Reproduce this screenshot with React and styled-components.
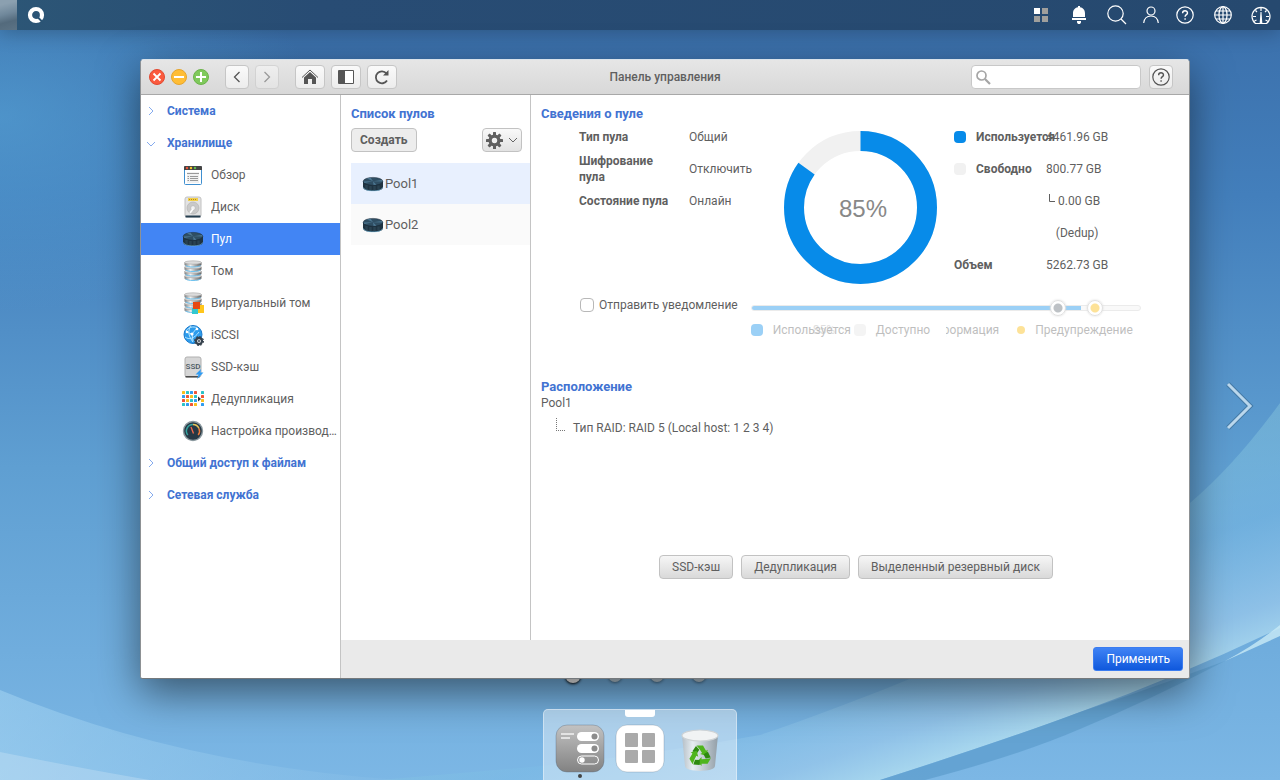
import React from 'react';
import styled, { createGlobalStyle, css } from 'styled-components';

const GlobalStyle = createGlobalStyle`
  *, *::before, *::after { box-sizing: border-box; }
  body {
    margin: 0;
    font: 12px/16px Roboto, "Liberation Sans", sans-serif;
    color: #5f5f5f;
  }
  button, input { font: inherit; color: inherit; }
  h1, h2, ul, dl, dd, p { margin: 0; padding: 0; }
  ul { list-style: none; }
  svg { display: block; flex: none; }
`;

/* ---------- desktop ---------- */

const Desktop = styled.div`
  position: relative;
  display: flex;
  flex-direction: column;
  height: 100vh;
  min-height: 640px;
  overflow: hidden;
  background: linear-gradient(#3f7bb6, #66a8dc);
`;

const Wallpaper = styled.svg`
  position: absolute;
  inset: 0;
  width: 100%;
  height: 100%;
`;

const TopBar = styled.header`
  position: relative;
  display: flex;
  align-items: center;
  justify-content: space-between;
  height: 30px;
  flex: none;
  padding-right: 7px;
  background: linear-gradient(90deg, #2c5676, #284c74 25%, #26496f);
  box-shadow: 0 2px 20px rgba(0, 0, 0, 0.25);
`;

const BarGroup = styled.div`
  display: flex;
  align-items: center;
  height: 100%;
  gap: ${(p) => p.$gap}px;
`;

const DesktopEdge = styled.span`
  width: 17px;
  height: 100%;
  background: linear-gradient(165deg, #8ba0b0 15%, #70889b 45%, #536a7c 70%, #5c7385);
`;

const BarButton = styled.button`
  display: grid;
  place-items: center;
  width: ${(p) => (p.$narrow ? 16 : 24)}px;
  height: 30px;
  padding: 0;
  border: 0;
  background: none;
`;

const Stage = styled.main`
  position: relative;
  flex: 1;
  min-height: 0;
  display: flex;
  padding: 29px 90px 30px 140px;
`;

const NextDesktop = styled.button`
  position: absolute;
  right: 24px;
  top: 50%;
  padding: 10px 0 0;
  border: 0;
  background: none;
`;

const Pager = styled.div`
  position: absolute;
  left: 0;
  right: 0;
  bottom: 26px;
  display: grid;
  grid-template-columns: repeat(4, 42px);
  justify-content: center;
  place-items: center;
  padding-right: 8px;
`;

const PagerDot = styled.span`
  width: ${(p) => (p.$active ? 16 : 14)}px;
  height: ${(p) => (p.$active ? 16 : 14)}px;
  border-radius: 50%;
  background: ${(p) => (p.$active ? '#eee' : '#b4c6d2')};
  box-shadow: 0 1px 3px ${(p) => (p.$active ? '#000' : 'rgba(0, 0, 0, 0.4)')};
`;

const DockArea = styled.footer`
  position: relative;
  display: flex;
  justify-content: center;
  flex: none;
`;

const Dock = styled.div`
  position: relative;
  display: flex;
  gap: 12px;
  height: 71px;
  padding: 15px 12px 0;
  border: 1px solid rgba(255, 255, 255, 0.4);
  border-bottom: 0;
  border-radius: 5px 5px 0 0;
  background: rgba(255, 255, 255, 0.4);
`;

const DockHandle = styled.span`
  position: absolute;
  top: 0;
  left: 50%;
  width: 30px;
  height: 7px;
  margin-left: -15px;
  border-radius: 0 0 3px 3px;
  background: #fff;
`;

const DockButton = styled.button`
  display: flex;
  flex-direction: column;
  align-items: center;
  gap: 1px;
  padding: 0;
  border: 0;
  background: none;
`;

const RunningDot = styled.span`
  width: 4px;
  height: 4px;
  border-radius: 50%;
  background: #444;
`;

/* ---------- window ---------- */

const Window = styled.section`
  position: relative;
  flex: 1;
  display: flex;
  flex-direction: column;
  min-width: 0;
  border: 1px solid #8d9194;
  border-top-color: #d9e2ea;
  border-bottom-color: #75797c;
  border-radius: 4px 4px 3px 3px;
  background: #fff;
  box-shadow: 0 14px 42px rgba(0, 0, 0, 0.5);
  overflow: hidden;
`;

const TitleBar = styled.div`
  display: grid;
  grid-template-columns: 1fr auto 1fr;
  align-items: center;
  height: 35px;
  flex: none;
  padding: 0 8px;
  border-bottom: 1px solid #a8a8a8;
  background: linear-gradient(#e6e6e6, #d8d8d8);
`;

const TitleGroup = styled.div`
  display: flex;
  align-items: center;
  justify-content: ${(p) => (p.$end ? 'flex-end' : 'flex-start')};
  padding-right: ${(p) => (p.$end ? 8 : 0)}px;
  gap: ${(p) => p.$gap}px;
`;

const WindowTitle = styled.h1`
  font-size: 12px;
  line-height: 16px;
  font-weight: 500;
  color: #5f5f5f;
`;

const RoundButton = styled.button`
  display: grid;
  place-items: center;
  width: 16px;
  height: 16px;
  padding: 0;
  border: 1px solid ${(p) => p.$edge};
  border-radius: 50%;
  background: ${(p) => p.$fill};
`;

const ToolButton = styled.button`
  display: grid;
  place-items: center;
  width: ${(p) => (p.$wide ? 30 : 24)}px;
  height: 24px;
  padding: 0;
  border: 1px solid #c6c6c6;
  border-radius: 4px;
  background: linear-gradient(#fafafa, #ececec);
  &:disabled { opacity: 0.5; }
`;

const SearchBox = styled.label`
  display: flex;
  align-items: center;
  gap: 4px;
  width: 170px;
  height: 24px;
  padding: 0 4px;
  border: 1px solid #c8c8c8;
  border-radius: 4px;
  background: #fff;
`;

const SearchInput = styled.input`
  flex: 1;
  min-width: 0;
  border: 0;
  outline: 0;
  background: none;
`;

const Body = styled.div`
  display: flex;
  flex: 1;
  min-height: 0;
`;

const Sidebar = styled.nav`
  width: 200px;
  flex: none;
  border-right: 1px solid #c4c4c4;
  background: #fff;
`;

const SectionButton = styled.button`
  display: flex;
  align-items: center;
  gap: 9px;
  width: 100%;
  height: 32px;
  padding: 0 5px;
  border: 0;
  background: none;
  font-weight: 700;
  color: #4273d2;
`;

const NavLink = styled.a`
  display: flex;
  align-items: center;
  gap: 6px;
  height: 32px;
  padding: 0 3px 0 40px;
  text-decoration: none;
  color: ${(p) => (p.$active ? '#fff' : '#5f5f5f')};
  background: ${(p) => (p.$active ? '#4285f4' : 'transparent')};
`;

const NavText = styled.span`
  overflow: hidden;
  white-space: nowrap;
  text-overflow: ellipsis;
`;

const Workspace = styled.div`
  display: flex;
  flex-direction: column;
  flex: 1;
  min-width: 0;
`;

const Columns = styled.div`
  display: flex;
  flex: 1;
  min-height: 0;
`;

const PoolColumn = styled.section`
  width: 190px;
  flex: none;
  padding: 11px 0 0 10px;
  border-right: 1px solid #c4c4c4;
`;

const Heading = styled.h2`
  font-size: 13px;
  line-height: 16px;
  font-weight: 700;
  color: #4273d2;
`;

const PoolTools = styled.div`
  display: flex;
  justify-content: space-between;
  padding: 6px 8px 11px 0;
`;

const buttonShape = css`
  height: 24px;
  border: 1px solid #c2c2c2;
  border-radius: 4px;
  white-space: nowrap;
`;

const CreateButton = styled.button`
  ${buttonShape}
  padding: 0 8px;
  background: #ededed;
  font-weight: 700;
`;

const GearButton = styled.button`
  ${buttonShape}
  display: flex;
  align-items: center;
  justify-content: space-between;
  width: 40px;
  padding: 0 3px;
  background: linear-gradient(#f9f9f9, #e2e2e2);
`;

const PoolButton = styled.button`
  display: flex;
  align-items: center;
  gap: 1px;
  width: 100%;
  height: 41px;
  padding: 0 0 0 11px;
  border: 0;
  font-size: 13px;
  background: ${(p) => (p.$active ? '#e8f0fe' : '#fafafa')};
`;

const Details = styled.section`
  display: flex;
  flex-direction: column;
  flex: 1;
  min-width: 0;
  padding: 11px 18px 0 10px;
`;

const Summary = styled.div`
  display: flex;
  padding-left: 38px;
`;

const Facts = styled.dl`
  display: grid;
  grid-template-columns: 110px 95px;
  grid-auto-rows: 32px;
  align-content: start;
  align-items: center;
  margin-top: -1px;
`;

const FactName = styled.dt`
  font-weight: 700;
  padding-right: 20px;
  white-space: ${(p) => (p.$wrap ? 'normal' : 'nowrap')};
`;

const Chart = styled.figure`
  margin: 9px 17px 0 0;
`;

const Capacity = styled.dl`
  display: grid;
  grid-template-columns: 22px 70px auto;
  grid-auto-rows: minmax(32px, auto);
  align-content: start;
  align-items: center;
  margin-top: -1px;
  line-height: 32px;
`;

const Swatch = styled.span`
  width: 12px;
  height: 12px;
  flex: none;
  border-radius: 4px;
  background: ${(p) => p.$fill};
`;

const CapacityName = styled.dt`
  grid-column: ${(p) => (p.$full ? '1 / 3' : 'auto')};
  width: 70px;
  font-weight: 700;
  white-space: nowrap;
`;

const CapacityValue = styled.dd`
  white-space: nowrap;
  ${(p) => p.$nested && css`
    grid-column: 3;
    text-align: center;
  `}
`;

const NestedLine = styled.span`
  display: flex;
  justify-content: center;
  gap: 2px;
  padding-right: 6px;
`;

const Notify = styled.div`
  display: flex;
  gap: 13px;
  padding: 11px 0 0 39px;
`;

const CheckLabel = styled.label`
  display: flex;
  align-items: center;
  gap: 5px;
  height: 20px;
  white-space: nowrap;
`;

const CheckBox = styled.input`
  appearance: none;
  width: 14px;
  height: 14px;
  margin: 0;
  border: 1px solid #b8b8b8;
  border-radius: 4px;
  background: #fff;
`;

const Threshold = styled.div`
  display: flex;
  flex-direction: column;
  gap: 5px;
  width: 390px;
  padding-top: 4px;
  opacity: 0.4;
`;

const Track = styled.div`
  position: relative;
  height: 18px;
  display: flex;
  align-items: center;
`;

const TrackBar = styled.div`
  width: 100%;
  height: 6px;
  border: 1px solid #cfcfcf;
  border-radius: 3px;
  background: #f1f1f1;
`;

const TrackFill = styled.div`
  height: 4px;
  border-radius: 2px 0 0 2px;
  background: #078be9;
`;

const Range = styled.input`
  position: absolute;
  inset: 0;
  width: 100%;
  margin: 0;
  appearance: none;
  background: none;
  pointer-events: none;
  &::-webkit-slider-thumb {
    appearance: none;
    width: 16px;
    height: 16px;
    border: 1px solid #b5b5b5;
    border-radius: 50%;
    background: radial-gradient(circle, ${(p) => p.$fill} 4px, #fff 5px);
    box-shadow: 0 0 2px #999;
  }
`;

const ThresholdLegend = styled.div`
  display: flex;
  align-items: center;
  line-height: 16px;
`;

const LegendItem = styled.span`
  position: relative;
  display: flex;
  align-items: center;
  gap: 10px;
  margin-right: ${(p) => p.$after}px;
`;

const UsedPercent = styled.span`
  position: absolute;
  left: 62px;
  opacity: 0.5;
`;

const CutLabel = styled.span`
  display: flex;
  justify-content: flex-end;
  width: 53px;
  margin-right: 18px;
  overflow: hidden;
`;

const LegendDot = styled.span`
  width: 8px;
  height: 8px;
  border-radius: 50%;
  background: #fcb900;
`;

const Location = styled.div`
  padding-top: 41px;
`;

const RaidLine = styled.p`
  display: flex;
  align-items: center;
  gap: 8px;
  padding: 7px 0 0 15px;
`;

const Elbow = styled.span`
  width: 9px;
  height: 13px;
  margin-bottom: 6px;
  border: 1px dotted #777;
  border-width: 0 0 1px 1px;
`;

const Actions = styled.div`
  display: flex;
  justify-content: center;
  gap: 8px;
  margin-top: auto;
  padding-bottom: 61px;
`;

const ActionButton = styled.button`
  ${buttonShape}
  padding: 0 12px;
  background: linear-gradient(#f6f6f6, #d9d9d9);
`;

const WindowFooter = styled.div`
  display: flex;
  align-items: center;
  justify-content: flex-end;
  height: 38px;
  flex: none;
  padding: 0 6px;
  background: #eaeaea;
`;

const ApplyButton = styled.button`
  height: 24px;
  padding: 0 12px;
  border: 1px solid #3b7cf0;
  border-radius: 3px;
  background: linear-gradient(#3f83f5, #0f58dc);
  color: #fff;
`;

/* ---------- icons ---------- */

const Chevron = ({ open }) => (
  <svg width="12" height="12" viewBox="0 0 12 12" fill="none" stroke="#85abee">
    <path d={open ? 'M1 5l4 4 4-4' : 'M3 2l4 4-4 4'} />
  </svg>
);

const Arrow = ({ d }) => (
  <svg width="12" height="14" viewBox="0 0 12 14" fill="none" stroke="#555" strokeWidth="1.3"><path d={d} /></svg>
);

const HelpMark = ({ size, color }) => (
  <svg width={size} height={size} viewBox="0 0 18 18" fill="none" stroke={color} strokeWidth="1.2">
    <circle cx="9" cy="9" r="8.2" />
    <path d="M6.6 7.2c0-3.3 4.9-3 4.9-.3 0 1.7-2.4 1.8-2.4 3.9M9.1 12.2v1.5" strokeWidth="1.4" />
  </svg>
);

const PoolIcon = () => (
  <svg width="22" height="22" viewBox="0 0 22 22">
    <path d="M1 8.500v5.500c0 2.600 4 4 10 4s10-1.400 10-4V8.500z" fill="#1f3341" />
    <path d="M1.500 14.500c.8 2.300 4.500 3.300 9.500 3.300s8.700-1 9.500-3.300" fill="none" stroke="#7cc4ea" strokeWidth=".7" opacity=".8" />
    <path d="M4.500 12v4M8.500 13v4M12.500 13v4M16.500 12.500v3.500" stroke="#2a4251" strokeWidth="2.500" />
    <ellipse cx="11" cy="8.300" rx="9.800" ry="3.900" fill="#2f4e63" stroke="#1a2b38" strokeWidth=".5" />
    <path d="M11 8.300L5 5.500 8.500 4.600zM11 8.300l9-1.300.4 1.500zM11 8.300l3.500 3.500-3 .3zM11 8.300L2.500 10 1.500 8.500z" fill="#4c7690" />
  </svg>
);

const DiskStack = () => (
  <>
    <defs>
      <linearGradient id="plate" x2="1">
        <stop offset="0" stopColor="#7b7b7b" /><stop offset=".35" stopColor="#f2f2f2" />
        <stop offset=".65" stopColor="#a5a5a5" /><stop offset="1" stopColor="#666" />
      </linearGradient>
    </defs>
    {[16, 11.5, 7, 2.5].map((y) => (
      <g key={y}>
        <path d={`M2.500 ${y}v2.200c0 1.300 3.800 2.300 8.500 2.300s8.500-1 8.500-2.300v-2.200z`} fill="url(#plate)" />
        <path d={`M3.500 ${y + 3}c1.500 1 4 1.500 7.500 1.500s6-.5 7.500-1.500`} fill="none" stroke="#6fc3f0" />
        <ellipse cx="11" cy={y} rx="8.500" ry="1.700" fill="#dcdcdc" stroke="#999" strokeWidth=".5" />
      </g>
    ))}
  </>
);

const dedupColors = ['#f9bf1b', '#ef5536', '#2f9cf0', '#29c3c8'];

const navIcons = {
  overview: (
    <>
      <rect x="2.500" y="2.500" width="17" height="18" rx="1" fill="#fff" stroke="#3f8fd0" />
      <path d="M2 6V3q0-1 1-1h16q1 0 1 1v3z" fill="#444" />
      <circle cx="5" cy="4" r="1.200" fill="#f0553a" /><circle cx="9" cy="4" r="1.200" fill="#f7c52b" /><circle cx="13" cy="4" r="1.200" fill="#5cc04b" />
      <rect x="5" y="8" width="12" height="11" fill="#f1f1f1" />
      <path d="M5 9.500h12M8 12.500h8M8 14.500h8M8 16.500h8M5.500 12.500H7M5.500 14.500H7M5.500 16.500H7" stroke="#999" />
    </>
  ),
  disk: (
    <>
      <rect x="3" y="1" width="16" height="20" rx="2" fill="#e3e3e3" stroke="#c2c2c2" />
      <path d="M3.500 19.500h15V21.500h-15z" fill="#263f50" />
      <path d="M6 2h10v3H6z" fill="#f2d04a" /><path d="M7 3.500h8" stroke="#b98a1a" strokeDasharray="1 1" />
      <circle cx="11" cy="12" r="6" fill="#c9c9c9" stroke="#b5b5b5" strokeWidth=".7" /><circle cx="11" cy="12" r="2.300" fill="#f2f2f2" stroke="#aaa" strokeWidth=".5" />
      <path d="M8 17l3-4" stroke="#fff" strokeWidth="1.500" />
    </>
  ),
  volume: <DiskStack />,
  virtual: (
    <>
      <DiskStack />
      <rect x="10" y="16" width="6" height="6" fill="#32c8d0" /><rect x="16" y="13" width="6" height="8" fill="#ffc61c" /><rect x="11" y="10" width="7" height="7" fill="#e84812" />
    </>
  ),
  iscsi: (
    <>
      <circle cx="11" cy="10.500" r="9" fill="#2d9cec" stroke="#1678cc" />
      <path d="M4 7c3-5 10-5 12-2M3 13c4 3 9 2 14-5M9 2c-4 5-2 11 2 16M4 8l6 2 5-6M10 10l1 7" fill="none" stroke="#b5e5ff" strokeWidth="1" />
      <circle cx="5" cy="8" r="1.300" fill="#fff" /><circle cx="10" cy="10" r="1.600" fill="#fff" /><circle cx="15" cy="5" r="1.300" fill="#fff" />
      <circle cx="17" cy="17" r="3" fill="#fff" stroke="#36424d" strokeWidth="2.300" /><circle cx="17" cy="17" r="4.500" fill="none" stroke="#36424d" strokeDasharray="2 1.500" /><circle cx="17" cy="17" r="1" fill="#36424d" />
    </>
  ),
  ssd: (
    <>
      <rect x="3" y="1" width="16" height="20" rx="2" fill="#d6d6d6" stroke="#b0b0b0" />
      <path d="M3.500 20h14v1.500h-14z" fill="#4c4c4c" />
      <text x="11" y="12.500" fontSize="8" fontWeight="500" textAnchor="middle" fill="#4b5962">SSD</text>
      <path d="M19 13l-5.500 5.500h3L15 23l6.500-6.500h-3z" fill="#2f9cf5" />
    </>
  ),
  dedup: (
    <>
      {[0, 1, 2, 3, 5].map((c) => [0, 1, 2, 3].map((r) => (
        <rect key={`${c}-${r}`} x={c === 5 ? 19 : c * 4} y={3 + r * 4} width="3" height="3" rx=".6" fill={dedupColors[(c * 3 + r * 2 + (r > 1 ? 1 : 0)) % 4]} />
      )))}
      <path d="M16 8.500l3 2.500-3 2.500z" fill="#333" />
    </>
  ),
  tuning: (
    <>
      <circle cx="11" cy="11" r="9.500" fill="#263845" stroke="#8b999f" strokeWidth="1.400" />
      <path d="M5.800 15a6.500 6.500 0 0 1 5.200-10.500" fill="none" stroke="#35a3a0" strokeWidth="1.500" />
      <path d="M11 4.500a6.500 6.500 0 0 1 6 4" fill="none" stroke="#e6c45a" strokeWidth="1.500" />
      <path d="M17 8.500a6.500 6.500 0 0 1-.8 6.500" fill="none" stroke="#ee7a3a" strokeWidth="1.500" />
      <path d="M9 7l2.500 6.500" stroke="#f46a4a" strokeWidth="1.300" />
    </>
  ),
};

const NavIcon = ({ name }) =>
  name === 'pool' ? <PoolIcon /> : (
    <svg width="22" height="22" viewBox="0 0 22 22" overflow="visible">{navIcons[name]}</svg>
  );

const IconSlot = styled.span`
  display: grid;
  place-items: center;
  width: 24px;
  flex: none;
`;

const QLogo = () => (
  <svg width="18" height="18" viewBox="0 0 18 18" fill="none">
    <circle cx="9" cy="9" r="6" stroke="#fff" strokeWidth="4.200" />
    <path d="M11 11.500l5 5" stroke="#2b5576" strokeWidth="1.800" />
  </svg>
);

const stroke = { fill: 'none', stroke: '#fff', strokeWidth: 1.2 };

const trayIcons = [
  { label: 'Рабочие столы', icon: (
    <svg width="14" height="14" viewBox="0 0 14 14" fill="#a09f9c">
      <path d="M0 0h6v6H0z" fill="#fff" /><path d="M8 0h6v6H8zM0 8h6v6H0zM8 8h6v6H8z" />
    </svg>
  ) },
  { label: 'Уведомления', icon: (
    <svg width="16" height="20" viewBox="0 0 16 20" fill="#fff">
      <path d="M7 1h2v1.300c3.500.6 5 3.200 5 6V12H2V8.300c0-2.800 1.500-5.400 5-6zM1 13h14v2H1zM6 16h4v1.500L9 19H7l-1-1.500z" />
    </svg>
  ) },
  { label: 'Поиск', icon: (
    <svg width="20" height="20" viewBox="0 0 20 20" {...stroke}><circle cx="8.500" cy="8.500" r="7.700" /><path d="M14 14l5 5" /></svg>
  ) },
  { label: 'Пользователь', narrow: true, icon: (
    <svg width="16" height="18" viewBox="0 0 16 18" {...stroke}><circle cx="8" cy="5" r="4" /><path d="M.7 17c.5-4.500 3-7 7.300-7s6.800 2.500 7.300 7" /></svg>
  ) },
  { label: 'Справка', icon: <HelpMark size={18} color="#fff" /> },
  { label: 'Язык', icon: (
    <svg width="18" height="18" viewBox="0 0 18 18" {...stroke}>
      <circle cx="9" cy="9" r="8.300" /><ellipse cx="9" cy="9" rx="4" ry="8.300" /><path d="M9 1v16M1 9h16M2 5h14M2 13h14" />
    </svg>
  ) },
  { label: 'Мониторинг', icon: (
    <svg width="20" height="19" viewBox="0 0 20 19" {...stroke}>
      <path d="M4.500 17.500a9 9 0 1 1 11 0zM10 2v3M4.500 4.500l1.500 1.500M15.500 4.500L14 6M2 10.500h3M18 10.500h-3M3.500 15l2-1M16.500 15l-2-1" />
      <path d="M9.500 6h1l.8 11H8.700z" fill="#fff" stroke="none" />
    </svg>
  ) },
];

const GearIcon = () => (
  <svg width="17" height="17" viewBox="0 0 17 17">
    <g fill="#5f5f5f">
      {[0, 45, 90, 135].map((a) => <rect key={a} x="7" y="0" width="3" height="17" rx=".6" transform={`rotate(${a} 8.500 8.500)`} />)}
      <circle cx="8.500" cy="8.500" r="6" />
    </g>
    <circle cx="8.500" cy="8.500" r="2.700" fill="#efefef" />
  </svg>
);

const SettingsApp = () => (
  <svg width="48" height="48" viewBox="0 0 48 48" overflow="visible">
    <defs><linearGradient id="grey" y2="1" x2="0"><stop stopColor="#c2c2c2" /><stop offset="1" stopColor="#828282" /></linearGradient></defs>
    <rect width="48" height="47" rx="11" fill="url(#grey)" stroke="rgba(80,100,120,.35)" />
    <path d="M5 9h13M5 13h9" stroke="#e3e3e3" strokeWidth="2" />
    <rect x="21" y="7" width="22" height="9" rx="4.500" fill="#fff" /><circle cx="38.500" cy="11.500" r="3" fill="#8c8c8c" />
    <rect x="21" y="19" width="22" height="9" rx="4.500" fill="#fff" /><circle cx="38.500" cy="23.500" r="3" fill="#8c8c8c" />
    <rect x="21.500" y="31" width="21" height="8" rx="4" fill="none" stroke="#fff" /><circle cx="26" cy="35" r="2.700" fill="#fff" />
  </svg>
);

const AppsIcon = () => (
  <svg width="48" height="48" viewBox="0 0 48 48" overflow="visible">
    <rect width="48" height="47" rx="11" fill="#fff" stroke="rgba(80,100,120,.25)" />
    <g fill="#aaa"><rect x="9" y="8" width="13" height="14" rx="1" /><rect x="26" y="8" width="13" height="14" rx="1" /><rect x="9" y="25" width="13" height="13" rx="1" /><rect x="26" y="25" width="13" height="13" rx="1" /></g>
  </svg>
);

const TrashIcon = () => (
  <svg width="48" height="48" viewBox="0 0 48 48">
    <defs><linearGradient id="bin" x2="1"><stop stopColor="#b7bcc0" /><stop offset=".3" stopColor="#f0f2f3" /><stop offset=".6" stopColor="#c4c9cd" /><stop offset="1" stopColor="#8d959b" /></linearGradient></defs>
    <path d="M6 10l3 31c.5 6.500 29.500 6.500 30 0l3-31z" fill="url(#bin)" opacity=".85" />
    <ellipse cx="24" cy="10.500" rx="18" ry="5.500" fill="#f1f3f4" stroke="#cdd2d5" strokeWidth="1.200" />
    {[0, 120, 240].map((a) => (
      <g key={a} transform={`rotate(${a} 24 31)`} fill="#4fb51d">
        <path d="M20.500 20.500h6.500l3 5.200 1.800-1-1.600 6-6-1.600 1.900-1.100L23.800 24.500z" />
        <path d="M20 21l3.300 3.800-2.600 4-4.300-2.500z" fill="#2e8a10" />
      </g>
    ))}
  </svg>
);

const Donut = ({ percent }) => {
  const length = 2 * Math.PI * 66.5;
  return (
    <svg width="153" height="153" viewBox="0 0 153 153" role="img" aria-label={`${percent}%`}>
      <g fill="none" strokeWidth="20" transform="rotate(-90 76.500 76.500)">
        <circle cx="76.500" cy="76.500" r="66.500" stroke="#f1f1f1" />
        <circle cx="76.500" cy="76.500" r="66.500" stroke="#078be9" strokeDasharray={`${(length * 84.8) / 100} ${length}`} />
      </g>
      <text x="79" y="86" textAnchor="middle" fontFamily="Liberation Sans, sans-serif" fontSize="24" fill="#888">{percent}%</text>
    </svg>
  );
};

const Background = () => (
  <Wallpaper viewBox="0 0 1280 780" preserveAspectRatio="none" aria-hidden="true">
    <defs>
      <linearGradient id="sky" x2="0" y2="1"><stop stopColor="#3a6ea9" /><stop offset=".25" stopColor="#437fbc" /><stop offset=".6" stopColor="#5f9fd2" /><stop offset="1" stopColor="#7cb7e5" /></linearGradient>
      <radialGradient id="glow" cx="0" cy=".15" r=".25"><stop stopColor="#57a5d8" stopOpacity=".6" /><stop offset="1" stopColor="#57a5d8" stopOpacity="0" /></radialGradient>
      <linearGradient id="sheet" gradientUnits="userSpaceOnUse" x1="1150" y1="440" x2="1230" y2="670"><stop stopColor="#8ccbdc" stopOpacity=".4" /><stop offset=".45" stopColor="#7cbce6" stopOpacity=".5" /><stop offset=".8" stopColor="#96c6ea" stopOpacity=".8" /><stop offset="1" stopColor="#b0def0" stopOpacity=".95" /></linearGradient>
      <linearGradient id="low" x2="1" y2="0"><stop stopColor="#a9d8f4" stopOpacity=".5" /><stop offset="1" stopColor="#84bce6" stopOpacity=".4" /></linearGradient>
    </defs>
    <path d="M0 0h1280v780H0z" fill="url(#sky)" />
    <path d="M0 0h1280v780H0z" fill="url(#glow)" />
    <path d="M1280 403Q1235 465 1190 503Q1050 625 885 689Q800 722 760 735Q640 757 520 768L380 780H880Q1020 735 1080 712Q1180 676 1280 628z" fill="url(#sheet)" />
    <path d="M1280 625Q1255 645 1225 661L1280 636z" fill="#c9ebf6" opacity=".8" />
    <path d="M1225 661Q1160 685 1080 712Q1000 742 880 780H925Q1020 755 1080 729Q1150 700 1225 661z" fill="#5f9fce" opacity=".8" />
    <path d="M0 690Q180 765 400 780H0z" fill="url(#low)" />
    <path d="M0 752Q90 770 150 780H0z" fill="#fff" opacity=".2" />
  </Wallpaper>
);

/* ---------- content ---------- */

const storageItems = [
  ['overview', 'Обзор'],
  ['disk', 'Диск'],
  ['pool', 'Пул'],
  ['volume', 'Том'],
  ['virtual', 'Виртуальный том'],
  ['iscsi', 'iSCSI'],
  ['ssd', 'SSD-кэш'],
  ['dedup', 'Дедупликация'],
  ['tuning', 'Настройка производительности'],
];

const Section = ({ title, open }) => (
  <SectionButton type="button" aria-expanded={!!open}><Chevron open={open} />{title}</SectionButton>
);

const WindowBar = () => (
  <TitleBar>
    <TitleGroup $gap={16}>
      <TitleGroup $gap={6}>
        <RoundButton aria-label="Закрыть" $fill="#fb5a3e" $edge="#e14a32">
          <svg width="10" height="10" viewBox="0 0 10 10" stroke="#fff" strokeWidth="1.800"><path d="M1.500 1.500l7 7M8.500 1.500l-7 7" /></svg>
        </RoundButton>
        <RoundButton aria-label="Свернуть" $fill="#ffbd35" $edge="#e6a52c">
          <svg width="10" height="10" viewBox="0 0 10 10" stroke="#fff" strokeWidth="2"><path d="M0 5h10" /></svg>
        </RoundButton>
        <RoundButton aria-label="Развернуть" $fill="#7fc95b" $edge="#6cb34a">
          <svg width="10" height="10" viewBox="0 0 10 10" stroke="#fff" strokeWidth="2"><path d="M0 5h10M5 0v10" /></svg>
        </RoundButton>
      </TitleGroup>
      <TitleGroup $gap={6}>
        <ToolButton aria-label="Назад"><Arrow d="M8.500 2L3.500 7l5 5" /></ToolButton>
        <ToolButton aria-label="Вперёд" disabled><Arrow d="M3.500 2l5 5-5 5" /></ToolButton>
      </TitleGroup>
      <TitleGroup $gap={6}>
        <ToolButton $wide aria-label="Главная">
          <svg width="18" height="18" viewBox="0 0 18 18" fill="#555"><path d="M1 9.500l8-7.500 8 7.500" fill="none" stroke="#555" /><path d="M3 9.500L9 4l6 5.500V16h-4v-5H7v5H3z" /></svg>
        </ToolButton>
        <ToolButton $wide aria-label="Боковая панель">
          <svg width="16" height="14" viewBox="0 0 16 14"><path d="M.5.5h15v13H.5z" fill="#fff" stroke="#555" /><path d="M1 1h6v12H1z" fill="#555" /></svg>
        </ToolButton>
        <ToolButton $wide aria-label="Обновить">
          <svg width="16" height="16" viewBox="0 0 16 16" fill="none" stroke="#555" strokeWidth="1.800"><path d="M13 11.500a6 6 0 1 1-.5-7" /><path d="M14.500 1v5.500H9z" fill="#555" stroke="none" /></svg>
        </ToolButton>
      </TitleGroup>
    </TitleGroup>
    <WindowTitle>Панель управления</WindowTitle>
    <TitleGroup $gap={8} $end>
      <SearchBox>
        <svg width="15" height="15" viewBox="0 0 15 15" fill="none" stroke="#a5a5a5" strokeWidth="1.700"><circle cx="5.500" cy="5.500" r="4.500" /><path d="M9 9l5 5" strokeWidth="2.200" /></svg>
        <SearchInput type="search" aria-label="Поиск" />
      </SearchBox>
      <ToolButton aria-label="Справка"><HelpMark size={18} color="#555" /></ToolButton>
    </TitleGroup>
  </TitleBar>
);

const PoolDetails = () => (
  <Details>
    <Heading>Сведения о пуле</Heading>
    <Summary>
      <Facts>
        <FactName>Тип пула</FactName><dd>Общий</dd>
        <FactName $wrap>Шифрование пула</FactName><dd>Отключить</dd>
        <FactName>Состояние пула</FactName><dd>Онлайн</dd>
      </Facts>
      <Chart><Donut percent={85} /></Chart>
      <Capacity>
        <Swatch $fill="#078be9" /><CapacityName>Используется</CapacityName><CapacityValue>4461.96 GB</CapacityValue>
        <Swatch $fill="#f1f1f1" /><CapacityName>Свободно</CapacityName><CapacityValue>800.77 GB</CapacityValue>
        <CapacityValue $nested>
          <NestedLine>
            <svg width="8" height="32" viewBox="0 0 8 32" fill="none" stroke="#5f5f5f"><path d="M1.500 9v7.500H7" /></svg>
            0.00 GB
          </NestedLine>
          (Dedup)
        </CapacityValue>
        <CapacityName $full>Объем</CapacityName><CapacityValue>5262.73 GB</CapacityValue>
      </Capacity>
    </Summary>
    <Notify>
      <CheckLabel><CheckBox type="checkbox" />Отправить уведомление</CheckLabel>
      <Threshold>
        <Track>
          <TrackBar><TrackFill style={{ width: '85%' }} /></TrackBar>
          <Range type="range" disabled defaultValue="80" $fill="#5b6770" aria-label="Информация" />
          <Range type="range" disabled defaultValue="90" $fill="#fcb900" aria-label="Предупреждение" />
        </Track>
        <ThresholdLegend>
          <LegendItem $after={3}><Swatch $fill="#078be9" />Используется<UsedPercent>85%</UsedPercent></LegendItem>
          <LegendItem $after={16}><Swatch $fill="#e5e5e5" />Доступно</LegendItem>
          <CutLabel>Информация</CutLabel>
          <LegendItem $after={0}><LegendDot />Предупреждение</LegendItem>
        </ThresholdLegend>
      </Threshold>
    </Notify>
    <Location>
      <Heading>Расположение</Heading>
      <p>Pool1</p>
      <RaidLine><Elbow />Тип RAID: RAID 5 (Local host: 1 2 3 4)</RaidLine>
    </Location>
    <Actions>
      <ActionButton type="button">SSD-кэш</ActionButton>
      <ActionButton type="button">Дедупликация</ActionButton>
      <ActionButton type="button">Выделенный резервный диск</ActionButton>
    </Actions>
  </Details>
);

export default function App() {
  return (
    <Desktop>
      <GlobalStyle />
      <Background />
      <TopBar>
        <BarGroup $gap={7}>
          <DesktopEdge />
          <BarButton aria-label="Меню"><QLogo /></BarButton>
        </BarGroup>
        <BarGroup $gap={14}>
          {trayIcons.map((t) => <BarButton key={t.label} $narrow={t.narrow} aria-label={t.label}>{t.icon}</BarButton>)}
        </BarGroup>
      </TopBar>
      <Stage>
        <Pager><PagerDot $active /><PagerDot /><PagerDot /><PagerDot /></Pager>
        <Window>
          <WindowBar />
          <Body>
            <Sidebar>
              <Section title="Система" />
              <Section title="Хранилище" open />
              <ul>
                {storageItems.map(([icon, text]) => (
                  <li key={icon}>
                    <NavLink href={`#${icon}`} $active={icon === 'pool'}>
                      <IconSlot><NavIcon name={icon} /></IconSlot>
                      <NavText>{text}</NavText>
                    </NavLink>
                  </li>
                ))}
              </ul>
              <Section title="Общий доступ к файлам" />
              <Section title="Сетевая служба" />
            </Sidebar>
            <Workspace>
              <Columns>
                <PoolColumn>
                  <Heading>Список пулов</Heading>
                  <PoolTools>
                    <CreateButton type="button">Создать</CreateButton>
                    <GearButton type="button" aria-label="Действия">
                      <GearIcon />
                      <svg width="10" height="8" viewBox="0 0 10 8" fill="none" stroke="#666"><path d="M1 2l4 4 4-4" /></svg>
                    </GearButton>
                  </PoolTools>
                  <PoolButton type="button" $active><PoolIcon />Pool1</PoolButton>
                  <PoolButton type="button"><PoolIcon />Pool2</PoolButton>
                </PoolColumn>
                <PoolDetails />
              </Columns>
              <WindowFooter><ApplyButton type="button">Применить</ApplyButton></WindowFooter>
            </Workspace>
          </Body>
        </Window>
        <NextDesktop aria-label="Следующий рабочий стол">
          <svg width="32" height="52" viewBox="0 0 32 52" fill="none">
            <path d="M4 4l22 22L4 48" stroke="#3c6d96" strokeWidth="5" opacity=".7" />
            <path d="M4 4l22 22L4 48" stroke="#bad7ec" strokeWidth="3" />
          </svg>
        </NextDesktop>
      </Stage>
      <DockArea>
        <Dock>
          <DockHandle />
          <DockButton aria-label="Панель управления"><SettingsApp /><RunningDot /></DockButton>
          <DockButton aria-label="Приложения"><AppsIcon /></DockButton>
          <DockButton aria-label="Корзина"><TrashIcon /></DockButton>
        </Dock>
      </DockArea>
    </Desktop>
  );
}
